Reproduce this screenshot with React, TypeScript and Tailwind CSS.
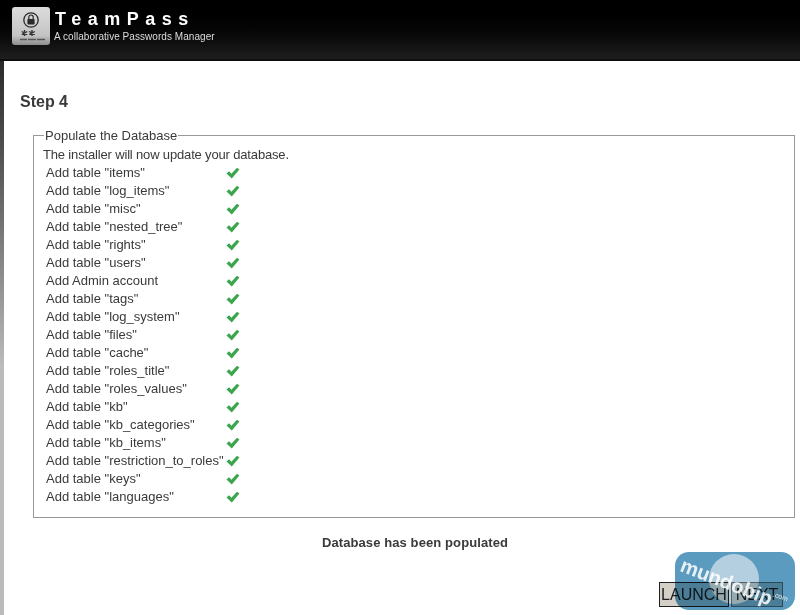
const tables = [
  'Add table "items"',
  'Add table "log_items"',
  'Add table "misc"',
  'Add table "nested_tree"',
  'Add table "rights"',
  'Add table "users"',
  "Add Admin account",
  'Add table "tags"',
  'Add table "log_system"',
  'Add table "files"',
  'Add table "cache"',
  'Add table "roles_title"',
  'Add table "roles_values"',
  'Add table "kb"',
  'Add table "kb_categories"',
  'Add table "kb_items"',
  'Add table "restriction_to_roles"',
  'Add table "keys"',
  'Add table "languages"',
];

const Logo = () => (
  <svg width="38" height="38" viewBox="0 0 38 38" fill="none" className="shrink-0">
    <defs>
      <linearGradient id="logoBg" x1="0" y1="0" x2="0" y2="1">
        <stop offset="0" stopColor="#dcdcdc" />
        <stop offset="0.75" stopColor="#c4c4c4" />
        <stop offset="1" stopColor="#8c8c8c" />
      </linearGradient>
    </defs>
    <rect width="38" height="38" rx="3" fill="url(#logoBg)" />
    <circle cx="19" cy="13" r="7.2" stroke="#2a2a2a" strokeWidth="1.3" />
    <rect x="15.4" y="12" width="7.2" height="5.4" rx="0.8" fill="#2a2a2a" />
    <path d="M16.8 12v-1.8a2.2 2.2 0 0 1 4.4 0V12" stroke="#2a2a2a" strokeWidth="1.2" />
    <path
      d="M12.5 23v6M9.7 24.5l5.6 3M15.3 24.5l-5.6 3M20 23v6M17.2 24.5l5.6 3M22.8 24.5l-5.6 3"
      stroke="#333"
      strokeWidth="1.4"
    />
    <path d="M8 32.5h7M16 32.5h8M25 32.5h8" stroke="#555" strokeWidth="1.6" />
  </svg>
);

const Check = () => (
  <svg width="14" height="12" viewBox="0 0 14 12">
    <path d="M0.5 6.5l2.6-2.2 2.3 2.4L11 0.8l2.4 1.8L5.8 11.4z" fill="#3aa54a" />
  </svg>
);

export default function App() {
  return (
    <div
      className="relative w-[800px] h-[615px] overflow-hidden flex flex-col bg-white text-[#3a3a3a]"
      style={{ fontFamily: '"Liberation Sans", Arial, sans-serif' }}
    >
      <header className="h-[61px] shrink-0 bg-gradient-to-b from-black to-[#1e1e1e] border-b-2 border-[#0e0e0e] flex items-start pl-[12px] pt-[7px] gap-[4px]">
        <Logo />
        <div className="text-white">
          <div className="text-[18px] leading-[21px] font-bold tracking-[6.5px] pl-[1px] pt-[2px]">TeamPass</div>
          <div className="text-[10px] leading-[14px] text-[#ddd] tracking-[0.05px]">A collaborative Passwords Manager</div>
        </div>
      </header>
      <div className="flex-1 flex min-h-0">
        <div className="w-[4px] shrink-0 bg-gradient-to-b from-[#2a2a2a] to-[#bbb] to-[55%]" />
        <main className="flex-1 pl-[16px] pr-[5px]">
          <h1 className="text-[16px] leading-[18px] font-bold mt-[32px]">Step 4</h1>
          <fieldset className="mt-[17px] ml-[13px] h-[390px] border border-[#999] pl-[9px] text-[13px] leading-[18px]">
            <legend className="px-[1px] ml-[1px] text-[13px] leading-[15px]">Populate the Database</legend>
            <div className="leading-[16px] mt-[4px] tracking-[-0.16px]">The installer will now update your database.</div>
            <div className="grid grid-cols-[180px_auto] justify-start pl-[3px] mt-[1px]">
              {tables.map((t) => (
                <div key={t} className="contents">
                  <div className="h-[18px]">{t}</div>
                  <div className="h-[18px] flex items-center">
                    <Check />
                  </div>
                </div>
              ))}
            </div>
          </fieldset>
          <div className="text-center text-[13px] font-bold leading-[15px] mt-[17px] pl-[15px] tracking-[0.1px]">Database has been populated</div>
          <div className="flex justify-end gap-[2px] mt-[32px] pr-[12px]">
            <button className="w-[70px] h-[25px] border border-[#222] bg-[#d4d0c8] text-[16px] leading-none text-[#222]">LAUNCH</button>
            <button className="w-[52px] h-[25px] border border-[#777] bg-[#d4d0c8] text-[16px] leading-none text-[#222]">NEXT</button>
          </div>
        </main>
      </div>
      {/* watermark sits over the buttons, multiply keeps their text visible */}
      <div className="absolute left-[675px] top-[552px] w-[120px] h-[58px] rounded-[14px] bg-[#5a9bbf] overflow-hidden mix-blend-multiply">
        <div className="absolute left-[34px] top-[2px] w-[50px] h-[50px] rounded-full bg-[#b4d0e0]" />
      </div>
      <div className="absolute left-[685px] top-[555px] rotate-[21deg] origin-top-left text-white/85 font-bold text-[20px] leading-none">mundobip</div>
      <div className="absolute left-[773px] top-[593px] rotate-[20deg] text-white/90 text-[7px] leading-none">.com</div>
    </div>
  );
}
